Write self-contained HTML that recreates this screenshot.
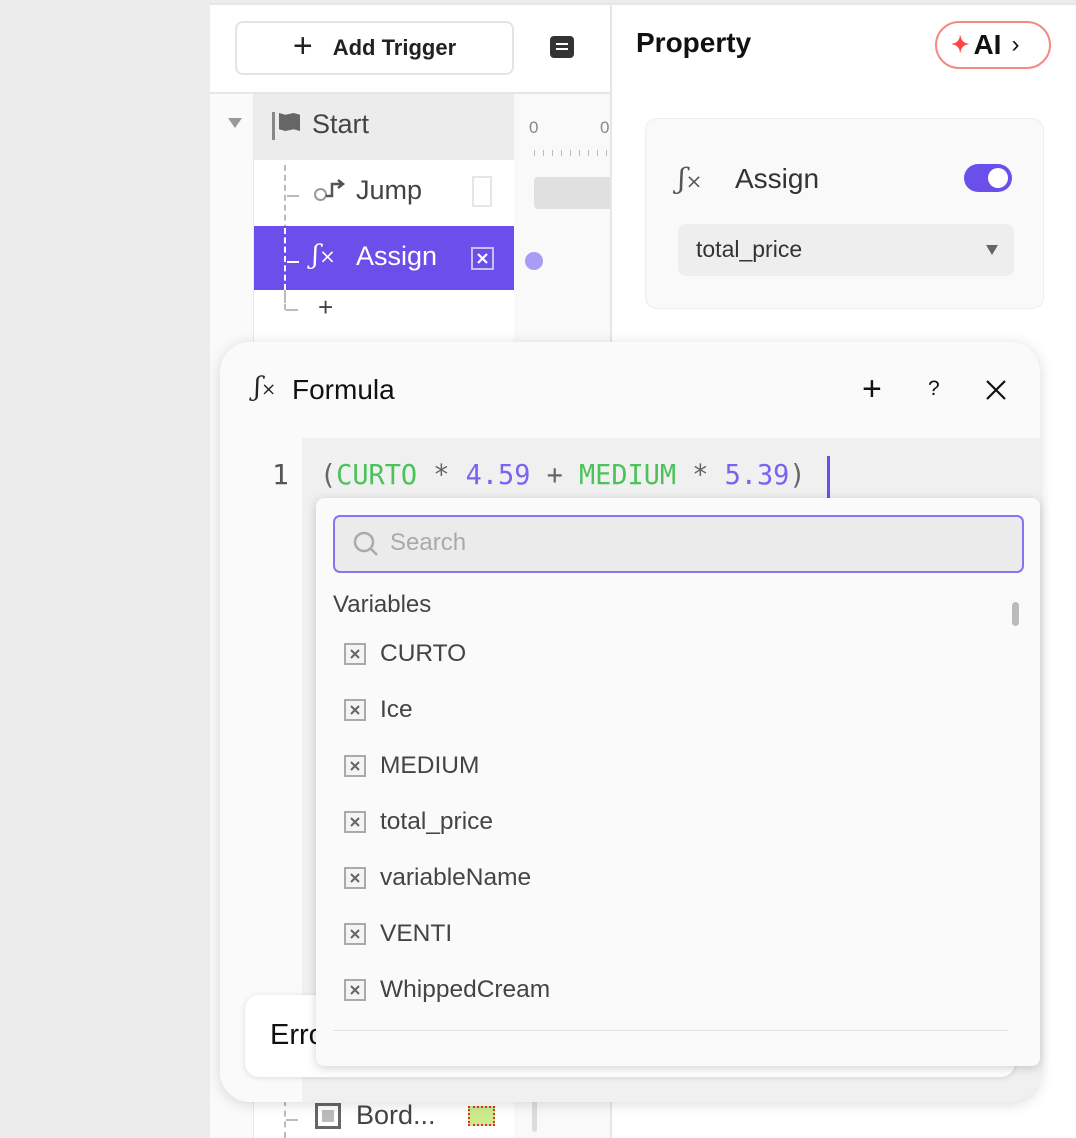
<!DOCTYPE html>
<html><head><meta charset="utf-8"><style>
*{box-sizing:border-box;margin:0;padding:0}
body{width:1076px;height:1138px;overflow:hidden;background:#ececec;font-family:"Liberation Sans",sans-serif;position:relative;color:#222}
.abs{position:absolute}
.mono{font-family:"DejaVu Sans Mono","Liberation Mono",monospace}
.item{position:absolute;left:344px;height:30px;display:flex;align-items:center;font-size:24.5px;color:#444}
.cb{width:22px;height:22px;margin-right:14px;display:block}
</style></head><body>
<svg width="0" height="0" style="position:absolute"><defs><symbol id="cb" viewBox="0 0 22 22"><rect x="1" y="1" width="20" height="20" fill="#f4f4f4" stroke="#aaa" stroke-width="2"/><path d="M7 7L15 15M15 7L7 15" stroke="#666" stroke-width="2"/></symbol></defs></svg>
<div class="abs" style="left:210px;top:3px;width:866px;height:1135px;background:#fff;border-top:2px solid #e6e6e6"></div>
<div class="abs" style="left:610px;top:3px;width:2px;height:1135px;background:#e6e6e6"></div>
<div class="abs" style="left:235px;top:21px;width:279px;height:54px;border:2px solid #e4e4e4;border-radius:8px;display:flex;align-items:center;justify-content:center;font-size:22px;font-weight:bold;color:#222"><span style="font-size:34px;font-weight:normal;margin-right:20px;margin-top:-4px">+</span>Add Trigger</div>
<div class="abs" style="left:550px;top:36px;width:24px;height:22px;background:#333;border-radius:4px"><div style="position:absolute;left:6px;top:7px;width:12px;height:2px;background:#fff"></div><div style="position:absolute;left:6px;top:12px;width:12px;height:2px;background:#fff"></div></div>
<div class="abs" style="left:210px;top:92px;width:400px;height:2px;background:#e6e6e6"></div>
<div class="abs" style="left:210px;top:94px;width:44px;height:1044px;background:#fafafa;border-right:1px solid #e8e8e8"></div>
<div class="abs" style="left:228px;top:118px;width:0;height:0;border-left:7px solid transparent;border-right:7px solid transparent;border-top:10px solid #999"></div>
<div class="abs" style="left:514px;top:94px;width:96px;height:1044px;background:#f9f9f9"></div>
<div class="abs" style="left:254px;top:94px;width:260px;height:66px;background:#ececec"></div>
<div class="abs" style="left:272px;top:112px;width:3px;height:28px;background:#888"></div>
<div class="abs" style="left:279px;top:113px;width:21px;height:18px;background:#666;clip-path:polygon(0 0,30% 10%,70% 0,100% 10%,100% 100%,70% 90%,30% 100%,0 90%)"></div>
<div class="abs" style="left:312px;top:109px;font-size:27px;color:#444">Start</div>
<div class="abs" style="left:284px;top:165px;height:145px;border-left:2px dashed #bbb"></div>
<div class="abs" style="left:287px;top:195px;width:12px;border-top:2px dashed #bbb"></div>
<div class="abs" style="left:314px;top:188px;width:13px;height:13px;border:2px solid #999;border-radius:50%"></div>
<svg class="abs" style="left:322px;top:176px" width="24" height="24"><path d="M4 20 H10 V8 H20 M16 4 L21 8 L16 12" stroke="#555" stroke-width="2.5" fill="none"/></svg>
<div class="abs" style="left:356px;top:175px;font-size:27px;color:#444">Jump</div>
<div class="abs" style="left:472px;top:176px;width:20px;height:31px;border:2px solid #e6e6e6"></div>
<div class="abs" style="left:529px;top:118px;font-size:17px;color:#888">0</div>
<div class="abs" style="left:600px;top:118px;font-size:17px;color:#888">0</div>
<div class="abs" style="left:534px;top:150px;width:76px;height:6px;background:repeating-linear-gradient(90deg,#bbb 0 1px,transparent 1px 9px)"></div>
<div class="abs" style="left:534px;top:177px;width:76px;height:32px;background:#e0e0e0;border-radius:4px 0 0 4px"></div>
<div class="abs" style="left:254px;top:226px;width:260px;height:64px;background:#6b4fea"></div>
<div class="abs" style="left:284px;top:228px;height:62px;border-left:2px dashed #fff"></div>
<div class="abs" style="left:287px;top:261px;width:12px;border-top:2px dashed #fff"></div>
<div class="abs" style="left:312px;top:240px;font-size:26px;color:#fff;font-style:italic;font-family:'DejaVu Serif',serif">ʃ<span style="font-style:normal;font-size:20px">×</span></div>
<div class="abs" style="left:356px;top:241px;font-size:27px;color:#fff">Assign</div>
<svg class="abs" style="left:471px;top:247px" width="23" height="23"><rect x="1" y="1" width="21" height="21" fill="none" stroke="#c9bff7" stroke-width="2"/><path d="M7 7L16 16M16 7L7 16" stroke="#fff" stroke-width="2.2"/></svg>
<div class="abs" style="left:525px;top:252px;width:18px;height:18px;border-radius:50%;background:#a99cf7"></div>
<div class="abs" style="left:284px;top:290px;height:20px;border-left:2px dashed #bbb"></div>
<div class="abs" style="left:286px;top:309px;width:12px;border-top:2px dashed #bbb"></div>
<div class="abs" style="left:318px;top:292px;font-size:26px;color:#444">+</div>
<div class="abs" style="left:284px;top:1100px;height:38px;border-left:2px dashed #bbb"></div>
<div class="abs" style="left:286px;top:1119px;width:12px;border-top:2px dashed #bbb"></div>
<div class="abs" style="left:315px;top:1103px;width:26px;height:26px;border:3px solid #666;background:#fff"><div style="margin:4px;width:12px;height:12px;background:#bbb"></div></div>
<div class="abs" style="left:356px;top:1100px;font-size:27px;color:#444">Bord...</div>
<div class="abs" style="left:468px;top:1106px;width:27px;height:20px;background:#cdea8f;border:2px dotted #d33"></div>
<div class="abs" style="left:532px;top:1100px;width:5px;height:32px;background:#ddd;border-radius:3px"></div>
<div class="abs" style="left:636px;top:27px;font-size:28px;font-weight:bold;color:#111">Property</div>
<div class="abs" style="left:935px;top:21px;width:116px;height:48px;border:2px solid #f28b82;border-radius:24px;display:flex;align-items:center;padding-left:14px;font-size:28px;font-weight:bold;color:#111"><span style="color:#f44;font-size:22px;margin-right:4px">✦</span>AI<span style="font-weight:normal;font-size:24px;margin-left:10px">›</span></div>
<div class="abs" style="left:645px;top:118px;width:399px;height:191px;background:#f9f9f9;border:1px solid #eee;border-radius:12px"></div>
<div class="abs" style="left:678px;top:162px;font-size:28px;color:#555;font-style:italic;font-family:'DejaVu Serif',serif">ʃ<span style="font-style:normal;font-size:20px">×</span></div>
<div class="abs" style="left:735px;top:163px;font-size:28px;color:#333">Assign</div>
<div class="abs" style="left:964px;top:164px;width:48px;height:28px;border-radius:14px;background:#6b4fea"><div style="position:absolute;right:4px;top:4px;width:20px;height:20px;border-radius:50%;background:#fff"></div></div>
<div class="abs" style="left:678px;top:224px;width:336px;height:52px;background:#eee;border-radius:8px;font-size:23px;color:#333;padding:12px 18px">total_price</div>
<div class="abs" style="left:986px;top:245px;border-left:6px solid transparent;border-right:6px solid transparent;border-top:10px solid #666"></div>
<div class="abs" style="left:220px;top:342px;width:820px;height:760px;background:#fafafa;border-radius:30px;box-shadow:0 2px 14px rgba(0,0,0,.15);overflow:hidden">
 <div class="abs" style="left:0;top:96px;width:820px;height:664px;background:#f0f0f0"></div>
 <div class="abs" style="left:0;top:96px;width:82px;height:664px;background:#fafafa"></div>
</div>
<div class="abs" style="left:254px;top:372px;font-size:26px;color:#222;font-style:italic;font-family:'DejaVu Serif',serif">ʃ<span style="font-style:normal;font-size:18px">×</span></div>
<div class="abs" style="left:292px;top:374px;font-size:28px;color:#111">Formula</div>
<div class="abs" style="left:862px;top:370px;font-size:34px;color:#111">+</div>
<div class="abs" style="left:928px;top:377px;font-size:21px;color:#111">?</div>
<svg class="abs" style="left:985px;top:379px" width="22" height="22"><path d="M2 2L20 20M20 2L2 20" stroke="#111" stroke-width="2.2"/></svg>
<div class="abs mono" style="left:272px;top:458px;font-size:28px;color:#555">1</div>
<div class="abs mono" style="left:320px;top:458px;font-size:28px;color:#666;white-space:pre;transform:scaleX(0.96);transform-origin:left">(<span style="color:#4cc25a">CURTO</span> * <span style="color:#7a63ef">4.59</span> + <span style="color:#4cc25a">MEDIUM</span> * <span style="color:#7a63ef">5.39</span>)</div>
<div class="abs" style="left:827px;top:456px;width:3px;height:42px;background:#6b4fea"></div>
<div class="abs" style="left:245px;top:995px;width:770px;height:82px;background:#fff;border-radius:14px;box-shadow:0 1px 6px rgba(0,0,0,.12)"></div>
<div class="abs" style="left:270px;top:1019px;font-size:29px;color:#111">Erro</div>
<div class="abs" style="left:316px;top:498px;width:724px;height:568px;background:#fafafa;border-radius:8px;box-shadow:0 2px 10px rgba(0,0,0,.18)"></div>
<div class="abs" style="left:333px;top:515px;width:691px;height:58px;background:#ebebeb;border:2px solid #8a72f2;border-radius:7px"></div>
<svg class="abs" style="left:352px;top:530px" width="28" height="28"><circle cx="12" cy="12" r="9" stroke="#aaa" stroke-width="2.5" fill="none"/><path d="M18.5 18.5L25 25" stroke="#aaa" stroke-width="2.5"/></svg>
<div class="abs" style="left:390px;top:529px;font-size:24px;color:#aaa">Search</div>
<div class="abs" style="left:333px;top:591px;font-size:24px;color:#444">Variables</div>
<div class="abs" style="left:1012px;top:602px;width:7px;height:24px;background:#bbb;border-radius:4px"></div>
<div class="item" style="top:639px"><svg class="cb"><use href="#cb"/></svg>CURTO</div>
<div class="item" style="top:695px"><svg class="cb"><use href="#cb"/></svg>Ice</div>
<div class="item" style="top:751px"><svg class="cb"><use href="#cb"/></svg>MEDIUM</div>
<div class="item" style="top:807px"><svg class="cb"><use href="#cb"/></svg>total_price</div>
<div class="item" style="top:863px"><svg class="cb"><use href="#cb"/></svg>variableName</div>
<div class="item" style="top:919px"><svg class="cb"><use href="#cb"/></svg>VENTI</div>
<div class="item" style="top:975px"><svg class="cb"><use href="#cb"/></svg>WhippedCream</div>
<div class="abs" style="left:333px;top:1030px;width:675px;height:1px;background:#e4e4e4"></div>
</body></html>
